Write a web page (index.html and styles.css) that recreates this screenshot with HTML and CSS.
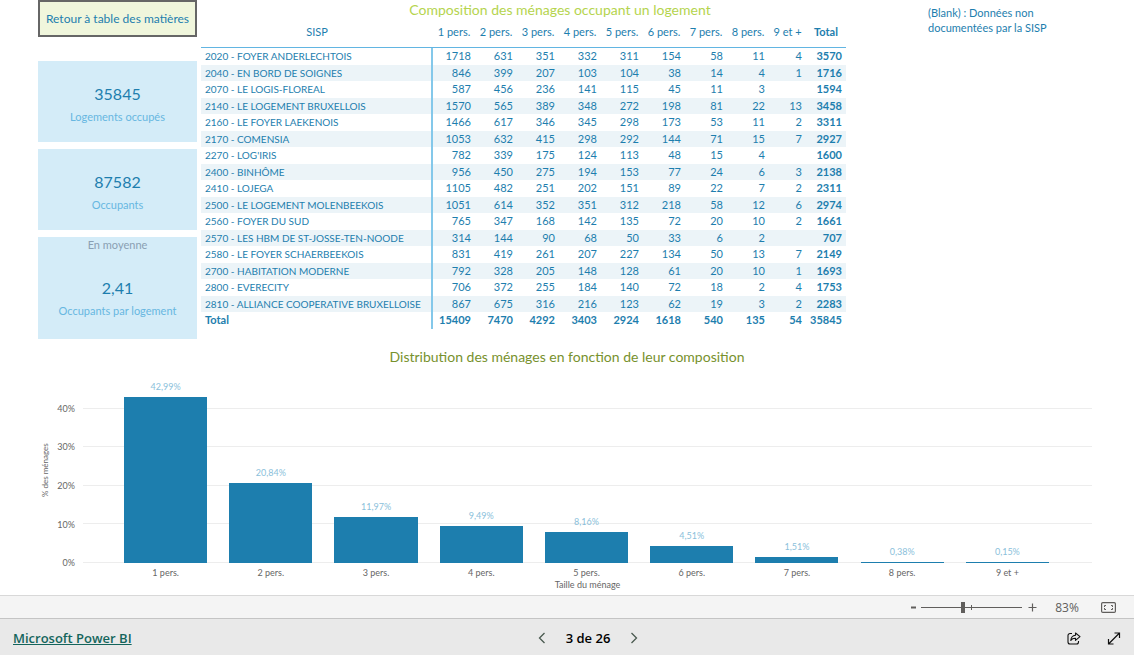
FILE: index.html
```html
<!DOCTYPE html>
<html lang="fr">
<head>
<meta charset="utf-8">
<title>Composition des ménages</title>
<link rel="stylesheet" href="styles.css">
</head>
<body>
<main class="report">
  <div class="top">
    <div class="side">
      <button class="back" type="button">Retour à table des matières</button>
      <section class="card"><p class="card-value">35845</p><p class="card-label">Logements occupés</p></section>
      <section class="card"><p class="card-value">87582</p><p class="card-label">Occupants</p></section>
      <section class="card card-tall"><h2 class="card-title">En moyenne</h2><p class="card-value">2,41</p><p class="card-label">Occupants par logement</p></section>
    </div>
    <section class="matrix">
      <h1 class="matrix-title">Composition des ménages occupant un logement</h1>
      <table class="table">
        <colgroup><col class="c-name"><col class="c-num" span="8"><col class="c-nine"><col class="c-total"></colgroup>
        <thead>
          <tr><th>SISP</th><th>1 pers.</th><th>2 pers.</th><th>3 pers.</th><th>4 pers.</th><th>5 pers.</th><th>6 pers.</th><th>7 pers.</th><th>8 pers.</th><th>9 et +</th><th>Total</th></tr>
        </thead>
        <tbody>
          <tr><th>2020 - FOYER ANDERLECHTOIS</th><td>1718</td><td>631</td><td>351</td><td>332</td><td>311</td><td>154</td><td>58</td><td>11</td><td>4</td><td>3570</td></tr>
          <tr><th>2040 - EN BORD DE SOIGNES</th><td>846</td><td>399</td><td>207</td><td>103</td><td>104</td><td>38</td><td>14</td><td>4</td><td>1</td><td>1716</td></tr>
          <tr><th>2070 - LE LOGIS-FLOREAL</th><td>587</td><td>456</td><td>236</td><td>141</td><td>115</td><td>45</td><td>11</td><td>3</td><td></td><td>1594</td></tr>
          <tr><th>2140 - LE LOGEMENT BRUXELLOIS</th><td>1570</td><td>565</td><td>389</td><td>348</td><td>272</td><td>198</td><td>81</td><td>22</td><td>13</td><td>3458</td></tr>
          <tr><th>2160 - LE FOYER LAEKENOIS</th><td>1466</td><td>617</td><td>346</td><td>345</td><td>298</td><td>173</td><td>53</td><td>11</td><td>2</td><td>3311</td></tr>
          <tr><th>2170 - COMENSIA</th><td>1053</td><td>632</td><td>415</td><td>298</td><td>292</td><td>144</td><td>71</td><td>15</td><td>7</td><td>2927</td></tr>
          <tr><th>2270 - LOG'IRIS</th><td>782</td><td>339</td><td>175</td><td>124</td><td>113</td><td>48</td><td>15</td><td>4</td><td></td><td>1600</td></tr>
          <tr><th>2400 - BINHÔME</th><td>956</td><td>450</td><td>275</td><td>194</td><td>153</td><td>77</td><td>24</td><td>6</td><td>3</td><td>2138</td></tr>
          <tr><th>2410 - LOJEGA</th><td>1105</td><td>482</td><td>251</td><td>202</td><td>151</td><td>89</td><td>22</td><td>7</td><td>2</td><td>2311</td></tr>
          <tr><th>2500 - LE LOGEMENT MOLENBEEKOIS</th><td>1051</td><td>614</td><td>352</td><td>351</td><td>312</td><td>218</td><td>58</td><td>12</td><td>6</td><td>2974</td></tr>
          <tr><th>2560 - FOYER DU SUD</th><td>765</td><td>347</td><td>168</td><td>142</td><td>135</td><td>72</td><td>20</td><td>10</td><td>2</td><td>1661</td></tr>
          <tr><th>2570 - LES HBM DE ST-JOSSE-TEN-NOODE</th><td>314</td><td>144</td><td>90</td><td>68</td><td>50</td><td>33</td><td>6</td><td>2</td><td></td><td>707</td></tr>
          <tr><th>2580 - LE FOYER SCHAERBEEKOIS</th><td>831</td><td>419</td><td>261</td><td>207</td><td>227</td><td>134</td><td>50</td><td>13</td><td>7</td><td>2149</td></tr>
          <tr><th>2700 - HABITATION MODERNE</th><td>792</td><td>328</td><td>205</td><td>148</td><td>128</td><td>61</td><td>20</td><td>10</td><td>1</td><td>1693</td></tr>
          <tr><th>2800 - EVERECITY</th><td>706</td><td>372</td><td>255</td><td>184</td><td>140</td><td>72</td><td>18</td><td>2</td><td>4</td><td>1753</td></tr>
          <tr><th>2810 - ALLIANCE COOPERATIVE BRUXELLOISE</th><td>867</td><td>675</td><td>316</td><td>216</td><td>123</td><td>62</td><td>19</td><td>3</td><td>2</td><td>2283</td></tr>
          <tr class="sum"><th>Total</th><td>15409</td><td>7470</td><td>4292</td><td>3403</td><td>2924</td><td>1618</td><td>540</td><td>135</td><td>54</td><td>35845</td></tr>
        </tbody>
      </table>
    </section>
    <p class="note">(Blank) : Données non documentées par la SISP</p>
  </div>

  <section class="chart">
    <h2 class="chart-title">Distribution des ménages en fonction de leur composition</h2>
    <div class="chart-body">
      <div class="y-title">% des ménages</div>
      <div class="y-axis"><span>40%</span><span>30%</span><span>20%</span><span>10%</span><span>0%</span></div>
      <div class="plot">
        <div class="lines"><i></i><i></i><i></i><i></i><i></i></div>
        <div class="bars">
          <div class="col"><span class="bar-label">42,99%</span><div class="bar" style="height:85.98%"></div></div>
          <div class="col"><span class="bar-label">20,84%</span><div class="bar" style="height:41.68%"></div></div>
          <div class="col"><span class="bar-label">11,97%</span><div class="bar" style="height:23.94%"></div></div>
          <div class="col"><span class="bar-label">9,49%</span><div class="bar" style="height:18.98%"></div></div>
          <div class="col"><span class="bar-label">8,16%</span><div class="bar" style="height:16.32%"></div></div>
          <div class="col"><span class="bar-label">4,51%</span><div class="bar" style="height:9.02%"></div></div>
          <div class="col"><span class="bar-label">1,51%</span><div class="bar" style="height:3.02%"></div></div>
          <div class="col"><span class="bar-label">0,38%</span><div class="bar" style="height:0.76%"></div></div>
          <div class="col"><span class="bar-label">0,15%</span><div class="bar" style="height:0.3%"></div></div>
        </div>
      </div>
      <div class="x-axis"><span>1 pers.</span><span>2 pers.</span><span>3 pers.</span><span>4 pers.</span><span>5 pers.</span><span>6 pers.</span><span>7 pers.</span><span>8 pers.</span><span>9 et +</span></div>
      <div class="x-title">Taille du ménage</div>
    </div>
  </section>
</main>

<div class="zoombar">
  <button class="zoom-btn" type="button" aria-label="Zoom arrière"><svg width="7" height="9" viewBox="0 0 7 9"><path d="M1 4.500h5" stroke="#605e5c" stroke-width="2"/></svg></button>
  <input class="slider" type="range" min="0" max="100" value="41" aria-label="Zoom">
  <button class="zoom-btn" type="button" aria-label="Zoom avant"><svg width="9" height="9" viewBox="0 0 9 9"><path d="M.5 4.500h8M4.500 .5v8" stroke="#605e5c" stroke-width="1.200"/></svg></button>
  <span class="zoom-value">83%</span>
  <button class="zoom-btn fit" type="button" aria-label="Ajuster à la page"><svg width="15" height="11" viewBox="0 0 15 11" fill="none" stroke="#605e5c"><rect x=".6" y=".6" width="13.800" height="9.800" rx="1.200" stroke-width="1.200"/><path d="M3.500 5V3.500H5M10 3.500h1.500V5M11.500 6v1.500H10M5 7.500H3.500V6"/></svg></button>
</div>

<footer class="footer">
  <a class="brand" href="#">Microsoft Power BI</a>
  <nav class="pager">
    <button class="icon-btn" type="button" aria-label="Page précédente"><svg width="8" height="12" viewBox="0 0 8 12" fill="none" stroke="#4a5a50" stroke-width="1.300"><path d="M6.500 1L1.500 6l5 5"/></svg></button>
    <span>3 de 26</span>
    <button class="icon-btn" type="button" aria-label="Page suivante"><svg width="8" height="12" viewBox="0 0 8 12" fill="none" stroke="#4a5a50" stroke-width="1.300"><path d="M1.500 1l5 5-5 5"/></svg></button>
  </nav>
  <div class="actions">
    <button class="icon-btn" type="button" aria-label="Partager"><svg width="14" height="13" viewBox="0 0 14 13" fill="none" stroke="#111" stroke-width="1.100" stroke-linejoin="round"><path d="M5 1.500H3A2 2 0 0 0 1 3.500v6.500a2 2 0 0 0 2 2h6.500a2 2 0 0 0 2-2V9"/><path d="M8.500 1l4.500 3.700-4.500 3.700V6.300C6.300 6.200 4.800 7 3.800 8.500 4 5.500 5.800 3.400 8.500 3.200z"/></svg></button>
    <button class="icon-btn" type="button" aria-label="Plein écran"><svg width="14" height="13" viewBox="0 0 14 13" fill="none" stroke="#111" stroke-width="1.200"><path d="M1.500 12L12.500 1M7.500 1h5v5M1.500 7v5h5"/></svg></button>
  </div>
</footer>
</body>
</html>
```
FILE: styles.css
```css
* { box-sizing: border-box; }
body {
  margin: 0;
  min-height: 100vh;
  display: flex;
  flex-direction: column;
  background: #fff;
  color: #1d7eae;
  font-family: Lato, "Open Sans", sans-serif;
  font-size: 11px;
}
h1, h2, p { margin: 0; font-weight: 400; }
button { font: inherit; color: inherit; background: none; border: 0; padding: 0; cursor: pointer; }
svg { display: block; }

.report { flex: 1; display: flex; flex-direction: column; padding: 0 42px 4px 38px; }
.top { display: grid; grid-template-columns: 159fr 645fr 242fr; gap: 4px; }

.side { display: flex; flex-direction: column; gap: 7px; }
.back {
  height: 37px;
  margin-bottom: 17px;
  border: 2px solid #666;
  background: #f0f6dc;
  font-size: 12px;
  white-space: nowrap;
}
.card {
  height: 81px;
  display: flex;
  flex-direction: column;
  align-items: center;
  padding-top: 22px;
  background: #d4ecf8;
}
.card-tall { height: 102px; padding-top: 0; }
.card-title { font-size: 11px; line-height: 16px; color: #8aa0b3; }
.card-tall .card-value { margin-top: 24px; }
.card-value { font-size: 16px; line-height: 22px; }
.card-label { font-size: 11px; line-height: 24px; color: #67b7e1; }

.matrix-title {
  height: 21px;
  padding-left: 73px;
  text-align: center;
  font-size: 14px;
  line-height: 20px;
  color: #b5d44e;
}
.table { width: 100%; table-layout: fixed; border-collapse: separate; border-spacing: 0; white-space: nowrap; }
.c-name { width: 232px; }
.c-num { width: 42px; }
.c-nine { width: 37px; }
.c-total { width: 40px; }
.table th, .table td { padding: 0 4px; font-weight: 400; text-align: right; line-height: 16px; vertical-align: top; }
.table thead th { height: 27px; padding-top: 3px; text-align: center; border-bottom: 1px solid #62b5e2; }
.table th:first-child { border-right: 2px solid #84c8ea; }
.table thead th:first-child { border-right: 0; }
.table tbody th { text-align: left; font-size: 10px; }
.table tbody tr:nth-child(odd) { height: 17px; }
.table tbody tr:nth-child(even) { height: 16px; background: #ecf4f8; }
.table th:last-child, .table td:last-child, .table .sum > * { font-weight: 700; }
.table .sum > * { font-size: 11px; }

.note { padding: 5px 30px 0 78px; line-height: 15px; }

.chart { flex: 1; display: flex; flex-direction: column; margin-top: 8px; }
.chart-title { height: 20px; margin-bottom: 3px; padding-left: 4px; text-align: center; font-size: 14px; line-height: 20px; color: #77912d; }
.chart-body {
  flex: 1;
  display: grid;
  grid-template-columns: 16px 29px 1fr;
  grid-template-rows: minmax(192px, 1fr) 16px 12px;
  font-size: 9px;
  color: #666;
}
.y-title { writing-mode: vertical-rl; transform: rotate(180deg); padding-bottom: 8px; text-align: center; line-height: 14px; font-size: 8px; }
.y-axis { display: flex; flex-direction: column; padding-right: 8px; text-align: right; transform: translateY(10%); }
.y-axis span { flex: 1; display: flex; align-items: center; justify-content: flex-end; }
.plot { display: grid; }
.lines, .bars { grid-area: 1 / 1; }
.lines { display: flex; flex-direction: column; }
.lines i { flex: 1; border-bottom: 1px solid #ededed; }
.bars, .x-axis { display: grid; grid-template-columns: repeat(9, 1fr); padding: 0 32px 0 30px; text-align: center; }
.col { display: flex; flex-direction: column; justify-content: flex-end; align-items: center; }
.bar { width: 79%; min-height: 1px; background: #1d7eae; }
.bar-label { line-height: 12px; margin-bottom: 4px; color: #8bbfdb; }
.x-axis { grid-column: 3; line-height: 20px; }
.x-title { grid-column: 3; text-align: center; line-height: 12px; }

.zoombar {
  height: 23px;
  display: flex;
  align-items: center;
  justify-content: flex-end;
  padding-right: 18px;
  border-top: 1px solid #d8d8d8;
  background: #f4f4f4;
  color: #605e5c;
}
.slider {
  appearance: none;
  width: 101px;
  height: 11px;
  margin: 0 6px 0 4px;
  background:
    linear-gradient(#605e5c, #605e5c) 50px 50% / 1px 5px no-repeat,
    linear-gradient(#605e5c, #605e5c) 0 50% / 100% 1px no-repeat;
}
.slider::-webkit-slider-thumb { appearance: none; width: 4px; height: 11px; background: #605e5c; }
.zoom-value { width: 40px; margin-left: 10px; text-align: center; font-size: 12px; font-family: "Open Sans", sans-serif; }
.fit { margin-left: 14px; }

.footer {
  height: 37px;
  display: flex;
  align-items: center;
  padding: 2px 13px 0 13px;
  border-top: 1px solid #c4c4c4;
  background: #e9e9e9;
  color: #000;
  font-family: "Open Sans", sans-serif;
  font-size: 13px;
  font-weight: 600;
}
.brand { flex: 1; color: #14655c; }
.pager { display: flex; align-items: center; gap: 20px; padding-left: 42px; }
.actions { flex: 1; display: flex; justify-content: flex-end; gap: 26px; }
```
